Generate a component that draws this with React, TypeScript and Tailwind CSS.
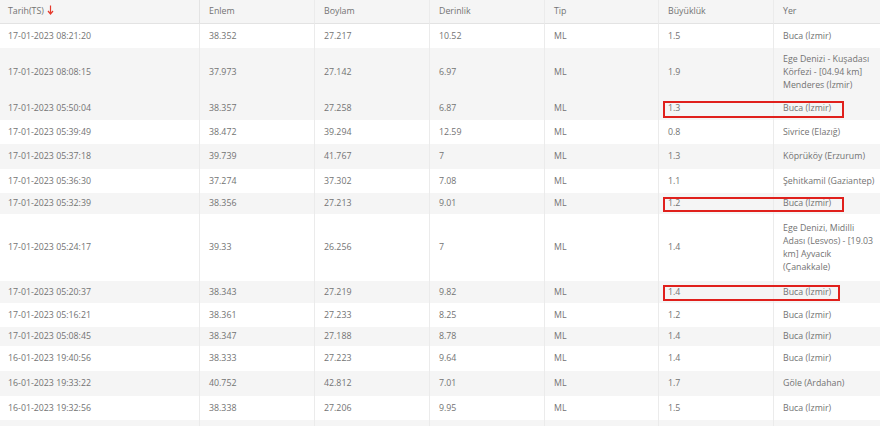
import React from "react";

interface Quake {
  id: number;
  date: string;
  lat: string;
  lon: string;
  depth: string;
  type: string;
  mag: string;
  place: string;
  h: string;
  shaded: boolean;
  box?: string;
}

const quakes: Quake[] = [
  { id: 1, date: "17-01-2023 08:21:20", lat: "38.352", lon: "27.217", depth: "10.52", type: "ML", mag: "1.5", place: "Buca (İzmir)", h: "h-[24px]", shaded: false },
  { id: 2, date: "17-01-2023 08:08:15", lat: "37.973", lon: "27.142", depth: "6.97", type: "ML", mag: "1.9", place: "Ege Denizi - Kuşadası Körfezi - [04.94 km] Menderes (İzmir)", h: "h-[49px]", shaded: true },
  { id: 3, date: "17-01-2023 05:50:04", lat: "38.357", lon: "27.258", depth: "6.87", type: "ML", mag: "1.3", place: "Buca (İzmir)", h: "h-[23px]", shaded: true, box: "w-[181px]" },
  { id: 4, date: "17-01-2023 05:39:49", lat: "38.472", lon: "39.294", depth: "12.59", type: "ML", mag: "0.8", place: "Sivrice (Elazığ)", h: "h-[24px]", shaded: false },
  { id: 5, date: "17-01-2023 05:37:18", lat: "39.739", lon: "41.767", depth: "7", type: "ML", mag: "1.3", place: "Köprüköy (Erzurum)", h: "h-[25px]", shaded: true },
  { id: 6, date: "17-01-2023 05:36:30", lat: "37.274", lon: "37.302", depth: "7.08", type: "ML", mag: "1.1", place: "Şehitkamil (Gaziantep)", h: "h-[24px]", shaded: false },
  { id: 7, date: "17-01-2023 05:32:39", lat: "38.356", lon: "27.213", depth: "9.01", type: "ML", mag: "1.2", place: "Buca (İzmir)", h: "h-[21px]", shaded: true, box: "w-[181px]" },
  { id: 8, date: "17-01-2023 05:24:17", lat: "39.33", lon: "26.256", depth: "7", type: "ML", mag: "1.4", place: "Ege Denizi, Midilli Adası (Lesvos) - [19.03 km] Ayvacık (Çanakkale)", h: "h-[67px]", shaded: false },
  { id: 9, date: "17-01-2023 05:20:37", lat: "38.343", lon: "27.219", depth: "9.82", type: "ML", mag: "1.4", place: "Buca (İzmir)", h: "h-[22px]", shaded: true, box: "w-[177px]" },
  { id: 10, date: "17-01-2023 05:16:21", lat: "38.361", lon: "27.233", depth: "8.25", type: "ML", mag: "1.2", place: "Buca (İzmir)", h: "h-[24px]", shaded: false },
  { id: 11, date: "17-01-2023 05:08:45", lat: "38.347", lon: "27.188", depth: "8.78", type: "ML", mag: "1.4", place: "Buca (İzmir)", h: "h-[19px]", shaded: true },
  { id: 12, date: "16-01-2023 19:40:56", lat: "38.333", lon: "27.223", depth: "9.64", type: "ML", mag: "1.4", place: "Buca (İzmir)", h: "h-[25px]", shaded: false },
  { id: 13, date: "16-01-2023 19:33:22", lat: "40.752", lon: "42.812", depth: "7.01", type: "ML", mag: "1.7", place: "Göle (Ardahan)", h: "h-[25px]", shaded: true },
  { id: 14, date: "16-01-2023 19:32:56", lat: "38.338", lon: "27.206", depth: "9.95", type: "ML", mag: "1.5", place: "Buca (İzmir)", h: "h-[24px]", shaded: false },
];

const cell = "border-r border-[#ebebeb] pl-[9px] pr-1 align-middle";

const SortArrow = () => (
  <svg width="7" height="10" viewBox="0 0 7 10" className="ml-[3px] inline-block align-[-1px]">
    <path d="M3.5 0.5 V8.5 M1 6 L3.5 9 L6 6" stroke="#e5392b" strokeWidth="1.2" fill="none" />
  </svg>
);

const App = () => {
  return (
    <div className="h-[426px] w-[880px] overflow-hidden bg-white font-['Open_Sans',sans-serif] text-[8.8px] leading-[13px] text-[#737373]">
      <table className="w-full table-fixed border-separate border-spacing-0">
        <colgroup>
          <col className="w-[200px]" />
          <col className="w-[115px]" />
          <col className="w-[115px]" />
          <col className="w-[115px]" />
          <col className="w-[114px]" />
          <col className="w-[115px]" />
          <col />
        </colgroup>
        <thead>
          <tr className="h-[24px] bg-[#f5f5f5] text-left font-normal">
            <th className="border-b border-r border-[#e3e3e3] pl-2 font-normal">
              Tarih(TS)
              <SortArrow />
            </th>
            <th className={`${cell} border-b border-b-[#e3e3e3] font-normal`}>Enlem</th>
            <th className={`${cell} border-b border-b-[#e3e3e3] font-normal`}>Boylam</th>
            <th className={`${cell} border-b border-b-[#e3e3e3] font-normal`}>Derinlik</th>
            <th className={`${cell} border-b border-b-[#e3e3e3] font-normal`}>Tip</th>
            <th className={`${cell} border-b border-b-[#e3e3e3] font-normal`}>Büyüklük</th>
            <th className="border-b border-[#e3e3e3] pl-[9px] font-normal">Yer</th>
          </tr>
        </thead>
        <tbody>
          {quakes.map((q) => (
            <tr key={q.id} className={`${q.h} ${q.shaded ? "bg-[#f5f5f5]" : "bg-white"}`}>
              <td className="border-r border-[#ebebeb] pl-2 align-middle">{q.date}</td>
              <td className={cell}>{q.lat}</td>
              <td className={cell}>{q.lon}</td>
              <td className={cell}>{q.depth}</td>
              <td className={cell}>{q.type}</td>
              <td className={`${cell} relative`}>
                {q.mag}
                {q.box && (
                  <div className={`pointer-events-none absolute left-[4px] top-[4px] bottom-[2px] ${q.box} border-2 border-[#e0201c]`} />
                )}
              </td>
              <td className="pl-[9px] pr-[3px] align-middle">{q.place}</td>
            </tr>
          ))}
          {/* next row, cut off by the bottom edge */}
          <tr className="h-[24px] bg-[#f5f5f5]">
            <td className="border-r border-[#ebebeb]" />
            <td className={cell} />
            <td className={cell} />
            <td className={cell} />
            <td className={cell} />
            <td className={cell} />
            <td />
          </tr>
        </tbody>
      </table>
    </div>
  );
};

export default App;
